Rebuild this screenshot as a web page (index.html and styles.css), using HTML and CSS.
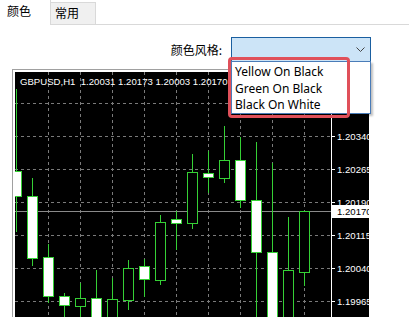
FILE: index.html
```html
<!DOCTYPE html>
<html lang="zh-CN">
<head>
    <meta charset="UTF-8">
    <title>颜色</title>
    <link rel="stylesheet" href="styles.css">
</head>
<body>
    <div class="tabs">
        <div class="tab active">颜色</div>
        <div class="tab">常用</div>
    </div>

    <div class="style-row">
        <label class="style-label">颜色风格:</label>
        <div class="combo">
            <svg class="chevron" width="9" height="5" viewBox="0 0 9 5">
                <polyline points="0.5,0.5 4.5,4.5 8.5,0.5" fill="none" stroke="#444" stroke-width="1"/>
            </svg>
        </div>
    </div>

    <div class="chart">
        <svg id="chart" width="354" height="246" viewBox="15 71 354 246">
            <rect x="15" y="71" width="354" height="246" fill="#000"/>
            <g id="grid" stroke="#7a7a7a" stroke-dasharray="3 3"></g>
            <line x1="15" y1="210.5" x2="331" y2="210.5" stroke="#8a8a8a"/>
            <g id="candles"></g>
            <line x1="331.5" y1="71" x2="331.5" y2="317" stroke="#fff"/>
            <g id="axis" class="axis-text"></g>
            <text class="symbol" x="20" y="84">GBPUSD,H1&#160; 1.20031 1.20173 1.20003 1.20170</text>
        </svg>
    </div>

    <ul class="combo-list">
        <li>Yellow On Black</li>
        <li>Green On Black</li>
        <li>Black On White</li>
    </ul>
    <div class="highlight"></div>

    <script>
        // chart drawing
        const NS = "http://www.w3.org/2000/svg";

        function el(name, attrs, parent) {
            const node = document.createElementNS(NS, name);
            for (const k in attrs) node.setAttribute(k, attrs[k]);
            parent.appendChild(node);
            return node;
        }

        const grid = document.getElementById("grid");
        for (let y = 102; y <= 300; y += 33) {
            el("line", { x1: 15, y1: y + 0.5, x2: 331, y2: y + 0.5 }, grid);
        }
        for (let x = 48; x <= 304; x += 32) {
            el("line", { x1: x + 0.5, y1: 71, x2: x + 0.5, y2: 317 }, grid);
        }

        // x, wick top, body top, body bottom, wick bottom, filled
        const candles = [
            [16, 88, 170, 195, 231, true],
            [32, 177, 195, 257, 265, true],
            [48, 243, 256, 295, 302, true],
            [64, 292, 295, 304, 330, true],
            [80, 282, 297, 305, 330, false],
            [96, 269, 297, 330, 330, true],
            [112, 277, 298, 330, 330, false],
            [128, 259, 267, 299, 309, false],
            [144, 258, 265, 278, 296, true],
            [160, 214, 221, 279, 284, false],
            [176, 210, 218, 222, 249, true],
            [192, 153, 171, 222, 228, false],
            [208, 150, 172, 176, 192, true],
            [224, 125, 159, 177, 182, false],
            [240, 136, 159, 199, 207, true],
            [256, 141, 199, 251, 330, true],
            [272, 162, 251, 330, 330, true],
            [288, 216, 269, 330, 330, false],
            [304, 210, 210, 271, 285, false]
        ];

        const layer = document.getElementById("candles");
        candles.forEach(function (c) {
            el("line", { x1: c[0] + 0.5, y1: c[1], x2: c[0] + 0.5, y2: c[4], stroke: "#35d035" }, layer);
            el("rect", {
                x: c[0] - 4.5, y: c[2] + 0.5, width: 10, height: c[3] - c[2],
                fill: c[5] ? "#fff" : "#000", stroke: "#35d035"
            }, layer);
        });

        const axis = document.getElementById("axis");
        const prices = [["1.20340", 135], ["1.20265", 168], ["1.20190", 201],
                        ["1.20115", 234], ["1.20040", 267], ["1.19965", 300]];
        prices.forEach(function (p) {
            el("line", { x1: 332, y1: p[1] + 0.5, x2: 335, y2: p[1] + 0.5, stroke: "#fff" }, axis);
            el("text", { x: 337, y: p[1] + 4 }, axis).textContent = p[0];
        });
        el("rect", { x: 332, y: 204, width: 37, height: 13, fill: "#fff" }, axis);
        el("text", { x: 337, y: 214, fill: "#000" }, axis).textContent = "1.20170";
    </script>
</body>
</html>
```

FILE: styles.css
```css
body {
    margin: 0;
    height: 317px;
    overflow: hidden;
    background-color: #fff;
    font-family: "Noto Sans", "Noto Sans CJK SC", sans-serif;
    font-size: 12px;
    color: #000;
}

.tabs {
    display: flex;
    align-items: flex-end;
    height: 24px;
    border-bottom: 1px solid #d9d9d9;
}

.tab {
    box-sizing: border-box;
    height: 22px;
    width: 45px;
    padding-left: 4px;
    line-height: 22px;
    background-color: #f0f0f0;
    border-top: 1px solid #d9d9d9;
    border-right: 1px solid #d9d9d9;
}

.tab.active {
    height: 25px;
    width: 51px;
    margin-bottom: -1px;
    padding-left: 7px;
    line-height: 23px;
    background-color: #fff;
    border-top: none;
}

.style-row {
    display: flex;
    justify-content: flex-end;
    align-items: center;
    gap: 9px;
    padding: 12px 38px 0 0;
}

.style-label {
    font-family: "Noto Sans CJK SC", sans-serif;
    font-size: 12px;
}

.combo {
    box-sizing: border-box;
    width: 140px;
    height: 25px;
    display: flex;
    justify-content: flex-end;
    align-items: center;
    padding-right: 5px;
    background-color: #cce4f7;
    border: 1px solid #1a5fa0;
}

.chevron {
    display: block;
}

.chart {
    margin: 7px 0 0 12px;
    padding: 2px 0 0 2px;
    border-left: 1px solid #a0a0a0;
    border-top: 1px solid #a0a0a0;
    width: 354px;
}

#chart {
    display: block;
}

.symbol,
.axis-text text {
    font-family: "Liberation Sans", sans-serif;
    font-size: 9.6px;
    fill: #fff;
}

.axis-text text[fill="#000"] {
    fill: #000;
}

.combo-list {
    position: absolute;
    left: 231px;
    top: 61px;
    box-sizing: border-box;
    width: 140px;
    height: 53px;
    margin: 0;
    padding: 2px 0 0 3px;
    list-style: none;
    background-color: #fff;
    border: 1px solid #4a7cb8;
    box-shadow: 2px 2px 2px rgba(0, 0, 0, 0.25);
    font-size: 12px;
    line-height: 16.7px;
}

.highlight {
    position: absolute;
    left: 228px;
    top: 57px;
    box-sizing: border-box;
    width: 122px;
    height: 61px;
    border: 3px solid #e0505a;
    border-radius: 4px;
}
```
